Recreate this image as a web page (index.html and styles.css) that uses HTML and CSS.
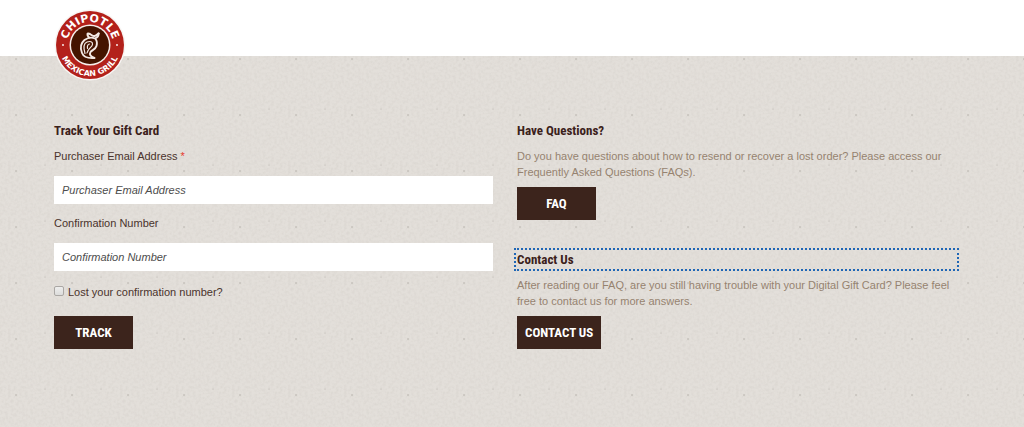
FILE: index.html
```html
<!DOCTYPE html>
<html lang="en">
<head>
<meta charset="utf-8">
<meta name="viewport" content="width=device-width, initial-scale=1">
<title>Track Your Gift Card</title>
<link rel="stylesheet" href="styles.css">
</head>
<body>
<header class="site-header">
  <a class="logo" href="#" aria-label="Chipotle Mexican Grill">
    <svg viewBox="0 0 72 72" width="72" height="72" aria-hidden="true">
      <defs>
        <path id="arc-top" d="M36 59a23 23 0 0 1 0-46a23 23 0 0 1 0 46" />
        <path id="arc-bottom" d="M36 5a31 31 0 0 0 0 62a31 31 0 0 0 0-62" />
      </defs>
      <circle cx="36" cy="36" r="35.500" fill="#f8f6f4"/>
      <circle cx="36" cy="36" r="34" fill="#b3211b"/>
      <circle cx="36" cy="36" r="20.500" fill="#f6eeea"/>
      <circle cx="36" cy="36" r="19" fill="#451400"/>
      <text class="logo-top"><textPath href="#arc-top" startOffset="50%">CHIPOTLE</textPath></text>
      <text class="logo-bottom"><textPath href="#arc-bottom" startOffset="50%">MEXICAN GRILL</textPath></text>
      <circle cx="9" cy="36" r="0.900" fill="#fff"/>
      <circle cx="63" cy="36" r="0.900" fill="#fff"/>
      <g fill="none" stroke="#f4e9e4" stroke-linecap="round" stroke-linejoin="round">
        <path d="M35 28.500C32.500 25.500 33 23.500 36 25c2 1.200 3 2.500 4.500 2 1.800-.4 2.700-2 4.300-2.500" stroke-width="2"/>
        <path d="M44.500 24.500c.3 2.500-1.300 4-3.500 5-3.500-1.500-7-1-10.500 1.500-3.500 3-4.500 8-2.500 13 1.500 4 6 5.500 12.500 5-4-1.500-5.500-3.500-4-6 1.500-2 5-2.500 6-6 .8-3 .3-5.500-1-7" stroke-width="1.900"/>
        <path d="M31 44.500c-1.500-5-1.500-10 2-11.500 3-1 6-.5 5.500 2.500-.5 3-4.500 3.500-5.500 8.500M33.500 39.500c-.5-2.500.5-4.500 2-4.500" stroke-width="1.200"/>
      </g>
    </svg>
  </a>
</header>
<main class="content">
  <form class="column" onsubmit="return false">
    <h2 class="title">Track Your Gift Card</h2>
    <label class="label" for="email">Purchaser Email Address <span class="required">*</span></label>
    <input class="field" id="email" type="email" placeholder="Purchaser Email Address" required>
    <label class="label" for="confirmation">Confirmation Number</label>
    <input class="field" id="confirmation" type="text" placeholder="Confirmation Number">
    <div class="check-row">
      <input class="check" id="lost" type="checkbox">
      <label for="lost">Lost your confirmation number?</label>
    </div>
    <button class="button" type="submit">TRACK</button>
  </form>
  <div class="column help">
    <section class="help-block">
      <h2 class="title">Have Questions?</h2>
      <p class="text">Do you have questions about how to resend or recover a lost order? Please access our Frequently Asked Questions (FAQs).</p>
      <a class="button" href="#">FAQ</a>
    </section>
    <section class="help-block">
      <h2 class="title title-focused" tabindex="0">Contact Us</h2>
      <p class="text">After reading our FAQ, are you still having trouble with your Digital Gift Card? Please feel free to contact us for more answers.</p>
      <a class="button" href="#">CONTACT US</a>
    </section>
  </div>
</main>
</body>
</html>
```
FILE: styles.css
```css
* {
  box-sizing: border-box;
}

body {
  margin: 0;
  min-height: 100vh;
  color: #4a332c;
  background-color: #e3dfda;
  /* Paper grain, tiled */
  background-image: url("data:image/svg+xml,%3Csvg xmlns='http://www.w3.org/2000/svg' width='56' height='56'%3E%3Cfilter id='n' x='0' y='0' width='100%25' height='100%25'%3E%3CfeTurbulence type='fractalNoise' baseFrequency='.35' numOctaves='2' seed='4' stitchTiles='stitch'/%3E%3CfeColorMatrix values='0 0 0 0 .35 0 0 0 0 .32 0 0 0 0 .29 .22 0 0 0 -.08'/%3E%3C/filter%3E%3Crect width='56' height='56' filter='url(%23n)'/%3E%3Cg fill='%23b5b0aa'%3E%3Ccircle cx='16' cy='3' r='.8'/%3E%3Ccircle cx='45' cy='53' r='.5'/%3E%3C/g%3E%3C/svg%3E");
  background-position: 0 56px;
  font: 11px/16px "Liberation Sans", Arial, sans-serif;
}

.site-header {
  height: 56px;
  padding: 9px 54px 0;
  background: #fff;
}

.logo {
  position: relative;
  display: inline-block;
}

.logo svg {
  display: block;
}

.logo-top,
.logo-bottom {
  fill: #fff;
  font-family: "DejaVu Sans", sans-serif;
  font-weight: 700;
  text-anchor: middle;
}

.logo-top {
  font-size: 11px;
}

.logo-bottom {
  font-size: 8px;
}

.content {
  display: grid;
  grid-template-columns: 1fr 1fr;
  column-gap: 24px;
  padding: 66px 68px 32px 54px;
}

.column {
  display: flex;
  flex-direction: column;
  align-items: flex-start;
}

.help {
  gap: 31px;
}

.help-block {
  align-self: stretch;
}

.title {
  margin: 0 0 9px;
  color: #3b211b;
  font: 700 13px/17px "Liberation Sans Narrow", "Arial Narrow", "Roboto Condensed", sans-serif;
}

.title-focused {
  outline: 2px dotted #1f66b5;
  outline-offset: 1px;
}

.label {
  margin-bottom: 12px;
}

.required {
  color: #e6392f;
}

.field {
  width: 100%;
  height: 28px;
  margin: 0 0 11px;
  padding: 0 8px;
  border: 0;
  background: #fff;
  color: #333;
  font: inherit;
}

.field::placeholder {
  color: #4d4d4d;
  font-style: italic;
  opacity: 1;
}

.check-row {
  display: flex;
  gap: 4px;
  margin: 2px 0 16px;
}

.check {
  appearance: none;
  width: 10px;
  height: 10px;
  margin: 2px 0 0;
  border: 1px solid #aaa7a4;
  border-radius: 2px;
  background: linear-gradient(#eeeeed, #dcdcdb);
}

.check:checked {
  background: #3b211b;
}

.text {
  margin: 0 0 7px;
  color: #968370;
}

.button {
  display: inline-block;
  min-width: 79px;
  padding: 8px;
  border: 0;
  background: #3c241c;
  color: #fff;
  font: 700 13px/17px "Liberation Sans Narrow", "Arial Narrow", "Roboto Condensed", sans-serif;
  text-align: center;
  text-decoration: none;
  cursor: pointer;
}

@media (max-width: 640px) {
  .content {
    grid-template-columns: 1fr;
    row-gap: 32px;
    padding: 48px 24px;
  }

  .site-header {
    padding-left: 24px;
  }
}
```
